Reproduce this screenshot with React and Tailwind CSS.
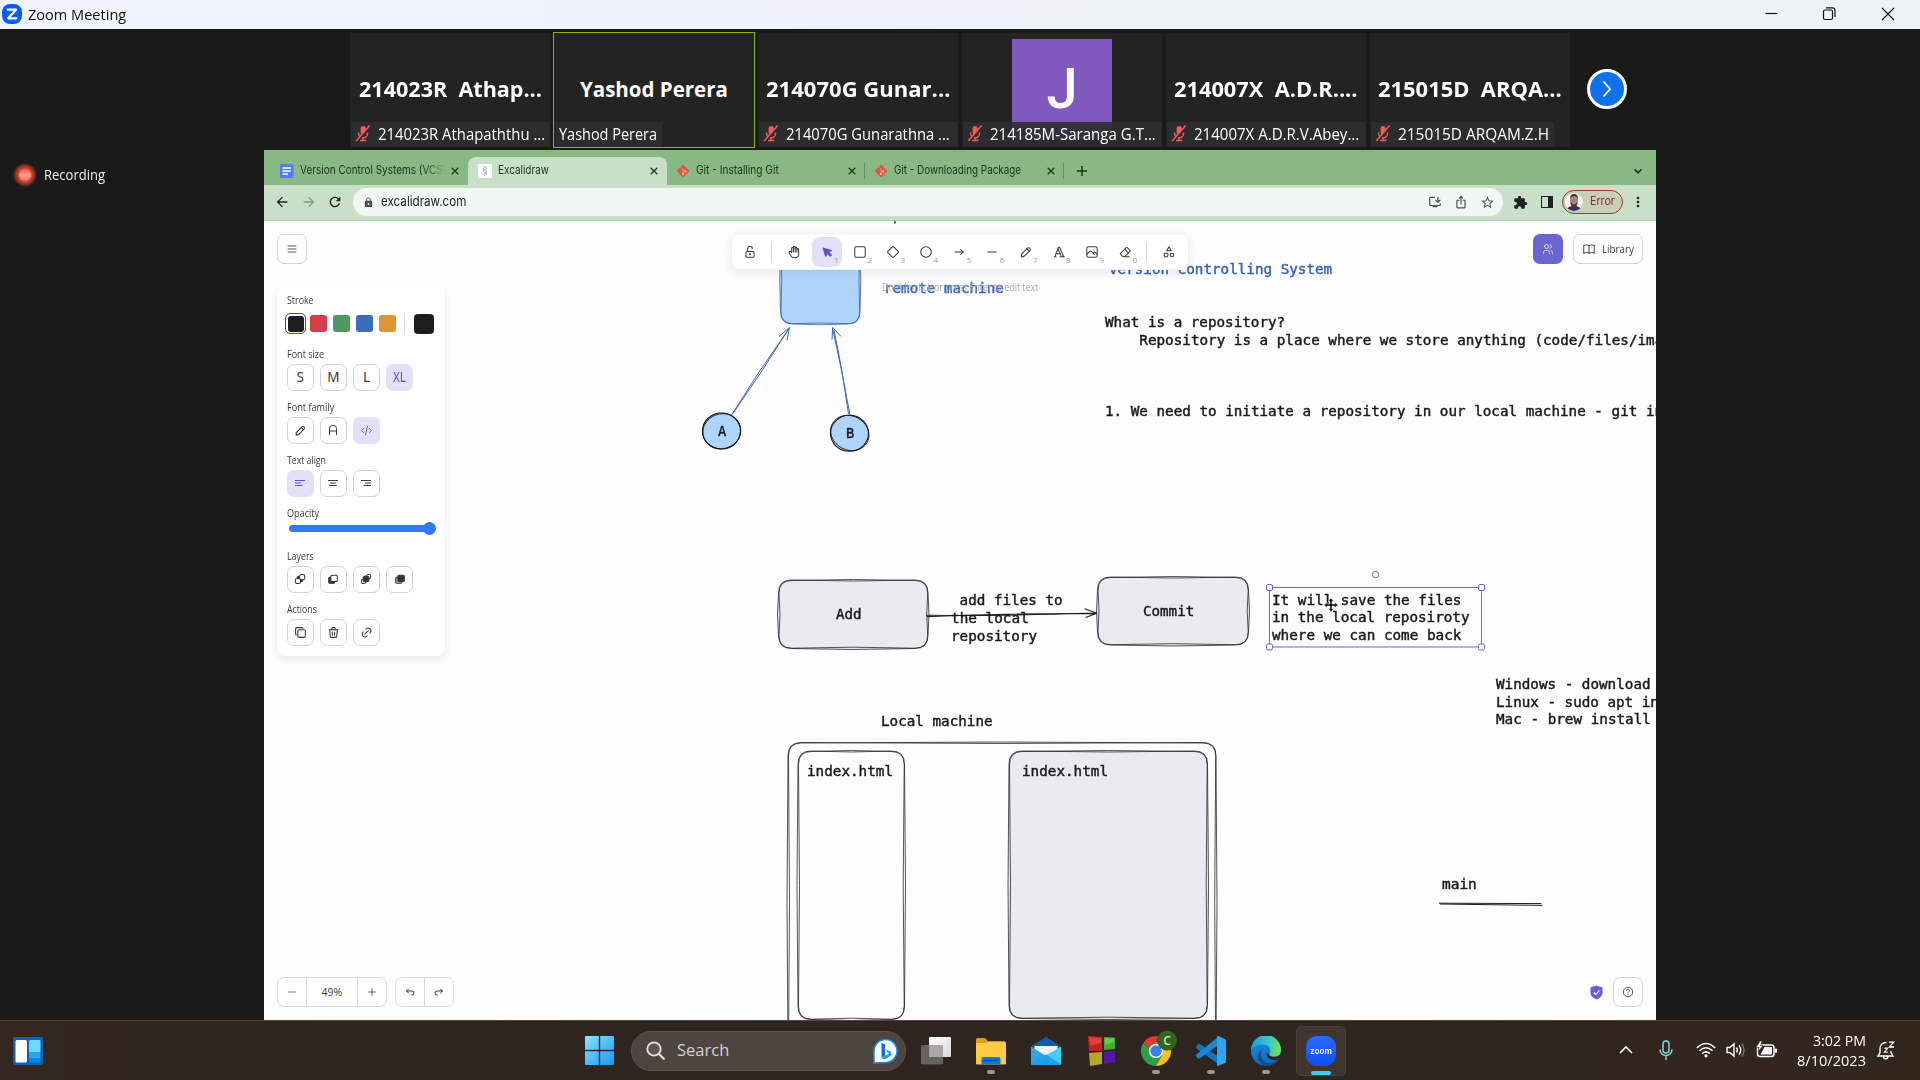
import { useLayoutEffect, useRef, useState } from "react";
import {
  TbLockOpen, TbHandStop, TbSquare, TbCircle, TbArrowNarrowRight, TbMinus, TbPencil, TbTypography,
  TbPhoto, TbEraser, TbTriangleSquareCircle, TbMenu2, TbUsers, TbBook, TbCopy, TbTrash, TbLink,
  TbPlus, TbArrowBackUp, TbArrowForwardUp, TbCode,
} from "react-icons/tb";
import { MdArrowBack, MdArrowForward, MdRefresh, MdLock, MdStarBorder, MdIosShare, MdInstallDesktop, MdExtension, MdMoreVert } from "react-icons/md";

/* Text squeezed or widened to an exact width. */
function Fit({ w, className = "", children }) {
  const ref = useRef(null);
  const [k, setK] = useState(1);
  useLayoutEffect(() => {
    if (ref.current) setK(w / ref.current.offsetWidth);
  }, [w]);
  return (
    <span className={"inline-block whitespace-pre " + className} style={{ width: w }}>
      <span ref={ref} className="inline-block origin-left" style={{ transform: `scaleX(${k})` }}>{children}</span>
    </span>
  );
}

const segoe = "font-['Open_Sans','Noto_Sans',sans-serif]";

function MutedMic() {
  return (
    <svg viewBox="0 0 16 17" className="h-[17px] w-4 shrink-0">
      <rect x="5.6" y="1" width="5" height="8.6" rx="2.5" fill="#f25c5c" />
      <path d="M3.6 7.5v.8a4.5 4.5 0 0 0 9 0v-.8M8.1 12.8v2.6M4.8 15.5h6.6" fill="none" stroke="#f25c5c" strokeWidth="1.4" />
      <path d="M15 1L2.2 16.4" stroke="#2a2a2a" strokeWidth="2.4" />
      <path d="M14.6 .6L1.2 16" stroke="#f25c5c" strokeWidth="1.5" />
    </svg>
  );
}

const people = [
  { big: "214023R  Athap...", bw: 183, label: "214023R Athapaththu ...", lw: 167, muted: true, full: true },
  { big: "Yashod Perera", bw: 148, label: "Yashod Perera", lw: 98, active: true },
  { big: "214070G Gunar...", bw: 185, label: "214070G Gunarathna ...", lw: 164, muted: true, full: true },
  { avatar: "J", label: "214185M-Saranga G.T...", lw: 166, muted: true, full: true },
  { big: "214007X  A.D.R....", bw: 184, label: "214007X A.D.R.V.Abey...", lw: 165, muted: true, full: true },
  { big: "215015D  ARQA...", bw: 184, label: "215015D ARQAM.Z.H", lw: 151, muted: true },
];

function Tile({ p }) {
  return (
    <div className={"relative flex h-[114px] w-[200px] items-center justify-center bg-[#232323] text-white " + (p.active ? "outline outline-1 outline-[#83b81a]" : "")}>
      {p.big && <Fit w={p.bw} className="-mt-[2px] text-[20.500px] leading-6 font-bold">{p.big}</Fit>}
      {p.avatar && (
        <div className="-mt-[2px] flex h-[100px] w-[100px] items-center justify-center bg-[#8058c0] font-[Roboto] text-[56px] leading-none font-medium">
          {p.avatar}
        </div>
      )}
      <div className={"absolute bottom-0 left-0 ml-px flex h-[25px] items-center bg-[#2e2e2e]/90 pb-[2px] " + (p.muted ? "pl-1" : "px-1") + (p.full ? " w-[199px]" : " pr-[5px]")}>
        {p.muted && <MutedMic />}
        <Fit w={p.lw} className={"text-[15.5px] leading-5 " + (p.muted ? "ml-[7px]" : "")}>{p.label}</Fit>
      </div>
    </div>
  );
}

function TitleBar() {
  return (
    <header className="flex h-[29px] items-center bg-gradient-to-r from-[#f0f3fb] to-[#eef3f7] pb-[1px] pl-[2px]">
      <svg viewBox="0 0 20 20" className="h-5 w-5">
        <rect width="20" height="20" rx="8" fill="#0b5cff" />
        <path d="M5.8 5.7h8.2L6.2 14.3h8.3" fill="none" stroke="#fff" strokeWidth="2.2" strokeLinejoin="round" strokeLinecap="round" />
      </svg>
      <Fit w={98} className="ml-[6px] text-[15px] leading-5 text-[#111]">Zoom Meeting</Fit>
      <svg viewBox="0 0 150 20" className="mr-[20px] ml-auto h-5 w-[150px]" fill="none" stroke="#111" strokeWidth="1.2">
        <path d="M15.500 9.500h12" />
        <rect x="73.500" y="6" width="9" height="9.500" rx="1.500" />
        <path d="M76 3.800h6.500a2.500 2.500 0 0 1 2.500 2.500v6.700" />
        <path d="M132 4l12 12M144 4l-12 12" />
      </svg>
    </header>
  );
}

const GitIcon = () => (
  <svg viewBox="0 0 14 14" className="-ml-px h-[14px] w-[14px]">
    <rect x="2.400" y="2.400" width="9.200" height="9.200" rx="1" transform="rotate(45 7 7)" fill="#e8533a" />
    <path d="M5.200 3.200l1.800 1.900v4.900M7 5.200l2.200 2.200" stroke="#8fc18a" strokeWidth=".9" fill="none" />
    <circle cx="7" cy="10" r="1" fill="#fbe" /><circle cx="9.300" cy="7.400" r="1" fill="#fbe" />
  </svg>
);
const DocsIcon = () => (
  <svg viewBox="0 0 14 14" className="h-[14px] w-[14px]">
    <rect width="13.500" height="14" rx="1.500" fill="#4f7fec" />
    <path d="M2.500 4h8.500M2.500 7h8.500M2.500 10h5.500" stroke="#fff" strokeWidth="1.500" />
  </svg>
);
const ExcaliIcon = () => (
  <svg viewBox="0 0 14 14" className="h-[14px] w-[14px]">
    <rect width="14" height="14" fill="#fff" />
    <path d="M5 2l4 3-4 2 4 3-3 2M9 2L5 5l4 3-4 3" stroke="#999" strokeWidth=".7" fill="none" />
  </svg>
);
const Close = () => (
  <svg viewBox="0 0 10 10" className="h-[10px] w-[10px]"><path d="M1.700 1.700l6.600 6.600M8.300 1.700L1.700 8.300" stroke="#1c3a1e" strokeWidth="1.300" /></svg>
);

function Tab({ icon, title, w, active, divider, fade }) {
  return (
    <div className={"relative flex h-[28px] w-[198.4px] items-center pl-[10px] text-[#1c331d] " + (active ? "rounded-t-lg bg-[#cadfc8]" : "")}>
      {icon}
      <Fit w={w} className={"ml-[6px] font-[Inter] text-[11.5px] " + (fade ? "[mask-image:linear-gradient(to_right,#000_85%,transparent)]" : "")}>{title}</Fit>
      <div className="mr-[8px] ml-auto flex"><Close /></div>
      {divider && <div className="absolute top-[6px] right-0 h-4 w-px bg-[#5f8f62]" />}
    </div>
  );
}

function Browser() {
  return (
    <>
      <div className="flex h-[35px] items-end bg-[#88b883] pl-[6px]">
        <Tab icon={<DocsIcon />} title="Version Control Systems (VCS)" w={146} fade />
        <Tab icon={<ExcaliIcon />} title="Excalidraw" w={51} active />
        <Tab icon={<GitIcon />} title="Git - Installing Git" w={83} divider />
        <Tab icon={<GitIcon />} title="Git - Downloading Package" w={127} divider />
        <svg viewBox="0 0 12 12" className="mb-2 ml-[12px] h-3 w-3"><path d="M6 1v10M1 6h10" stroke="#1c331d" strokeWidth="1.500" /></svg>
        <svg viewBox="0 0 12 12" className="mr-3 mb-2 ml-auto h-3 w-3"><path d="M2.500 4.200L6 7.800l3.500-3.600" fill="none" stroke="#1c331d" strokeWidth="1.500" /></svg>
      </div>
      <div className="flex h-[36px] items-center border-b border-[#b9cbb7] bg-[#cadfc8] pb-px pl-[10px] text-[#222]">
        <MdArrowBack className="h-4 w-4" />
        <MdArrowForward className="ml-[11px] h-4 w-4 text-[#849783]" />
        <MdRefresh className="ml-[10px] h-4 w-4" />
        <div className="ml-[10px] flex h-[28px] w-[1150px] items-center rounded-full bg-[#f1f7f3] pl-[10px] text-[#4a4f4a]">
          <MdLock className="h-[11px] w-[11px]" />
          <Fit w={85} className="ml-[7px] font-[Inter] text-[13px] text-[#222]">excalidraw.com</Fit>
          <MdInstallDesktop className="ml-auto h-[14px] w-[14px]" />
          <MdIosShare className="ml-[12px] h-[14px] w-[14px]" />
          <MdStarBorder className="mr-[8px] ml-[12px] h-[15px] w-[15px]" />
        </div>
        <MdExtension className="ml-[10px] h-[15px] w-[15px]" />
        <div className="ml-[13px] h-3 w-3 border-[1.5px] border-r-[5px] border-[#222]" />
        <div className="ml-[9px] flex h-[24px] w-[61px] items-center rounded-full border border-[#a3372f] bg-[#c8cfb9] pl-[2px]">
          <svg viewBox="0 0 18 18" className="h-[18px] w-[18px]">
            <clipPath id="face"><circle cx="9" cy="9" r="9" /></clipPath>
            <g clipPath="url(#face)">
              <rect width="18" height="18" fill="#f4f4f4" />
              <path d="M1 18q1-5 8-5t8 5z" fill="#2a3560" />
              <ellipse cx="9" cy="7.500" rx="4" ry="5.500" fill="#a9837a" />
              <path d="M5 6q0-5 4-5t4 5q-1-3-4-3t-4 3z" fill="#333" />
              <path d="M5.400 9.500q3.600 1.500 7.200 0-.6 5-3.600 5t-3.600-5z" fill="#4a3a38" />
              <path d="M7.500 10.600h3" stroke="#ccc" strokeWidth=".8" />
            </g>
          </svg>
          <Fit w={25} className="ml-[7px] font-[Inter] text-[11.5px] text-[#8f2a22]">Error</Fit>
        </div>
        <MdMoreVert className="ml-[7px] h-4 w-4" />
      </div>
    </>
  );
}

/* Hand-drawn rounded rectangle: r is the corner radius, d the bow of each side. */
function sketchRect(x, y, w, h, r, d) {
  const X = x + w, Y = y + h;
  return `M${x + r} ${y}Q${x + w / 2} ${y + d} ${X - r} ${y}Q${X} ${y} ${X} ${y + r}Q${X + d} ${y + h / 2} ${X} ${Y - r}Q${X} ${Y} ${X - r} ${Y}Q${x + w / 2} ${Y + d} ${x + r} ${Y}Q${x} ${Y} ${x} ${Y - r}Q${x - d} ${y + h / 2} ${x} ${y + r}Q${x} ${y} ${x + r} ${y}Z`;
}
function Sketch({ x, y, w, h, r = 13, fill = "none", stroke = "#1e1e1e", bow = 2 }) {
  return (
    <g stroke={stroke} strokeWidth="0.75">
      <path d={sketchRect(x, y, w, h, r, bow)} fill={fill} />
      <path d={sketchRect(x + 0.5, y + 0.5, w - 0.8, h - 0.8, r, -bow)} fill="none" />
    </g>
  );
}

function Drawing() {
  return (
    <svg viewBox="264 221 1392 799" className="absolute inset-0 h-[799px] w-[1392px]" fill="none">
      <path d="M895 219v4.500" stroke="#1e1e1e" strokeWidth="1.300" />
      <Sketch x={780.5} y={236} w={79.500} h={88} r={12} fill="#b0d5fc" stroke="#2e62ae" bow={1.5} />
      <g stroke="#3c69b4" strokeWidth="1">
        <path d="M731.500 415Q758 372 789.500 328M732.600 414Q761.500 373 788.500 329M789.500 327.500l-10.500 9M789.500 327.500l-2.500 13" />
        <path d="M850 415Q842 370 832.500 328M848.500 414Q842 368 834 330M832.700 327.500l-.7 12M832.700 327.500l8.300 9" />
      </g>
      <g stroke="#161616" strokeWidth="1.100">
        <ellipse cx="721.500" cy="431" rx="19" ry="18" fill="#b0d5fc" />
        <ellipse cx="721.800" cy="431.300" rx="19.200" ry="17.400" transform="rotate(-20 721.800 431.300)" strokeWidth=".8" />
        <ellipse cx="849.500" cy="433.300" rx="19" ry="18" fill="#b0d5fc" />
        <ellipse cx="849.800" cy="433" rx="19.800" ry="17" transform="rotate(28 849.800 433)" strokeWidth=".8" />
      </g>
      <Sketch x={778.5} y={580} w={149.500} h={68.500} fill="#e9ebf0" />
      <Sketch x={1097.5} y={577} w={151} h={68} fill="#e9ebf0" />
      <path d="M926 615.300Q1000 616 1096 613M927 616.600Q1020 613 1096 613.600M1097 613.300l-12.500-4.500M1097 613.300l-11.500 4.200" stroke="#1e1e1e" strokeWidth="1.100" />
      <Sketch x={788} y={742.500} w={428} h={320} />
      <Sketch x={798} y={751} w={106.500} h={268.500} />
      <Sketch x={1009} y={751} w={198.500} h={267.500} fill="#e9ebf0" />
      <path d="M1439 903.200L1541.500 903.600M1440 904L1542.500 905.400" stroke="#1e1e1e" strokeWidth="1" />
      <g stroke="#6f66cc" strokeWidth="1" fill="#fff">
        <rect x="1269.500" y="587.500" width="212" height="59.500" fill="none" />
        <rect x="1266.500" y="584.500" width="6" height="6" rx="1.500" />
        <rect x="1478.500" y="584.500" width="6" height="6" rx="1.500" />
        <rect x="1266.500" y="644" width="6" height="6" rx="1.500" />
        <rect x="1478.500" y="644" width="6" height="6" rx="1.500" />
        <circle cx="1375.500" cy="574.500" r="3.200" />
      </g>
    </svg>
  );
}

/* Canvas notes: x and y are page positions of the first glyph and the middle of the line. */
const notes = [
  [884, 288.500, "remote machine", "b"],
  [1108.500, 269.500, "Version Controlling System", "b"],
  [1104.500, 322, "What is a repository?"],
  [1104.500, 340, "    Repository is a place where we store anything (code/files/images)"],
  [1105, 411.500, "1. We need to initiate a repository in our local machine - git init"],
  [717.500, 431.500, "A"],
  [845.500, 433, "B"],
  [836, 614, "Add"],
  [1142.500, 611, "Commit"],
  [951, 600.500, " add files to"],
  [951, 618, "the local"],
  [951, 636, "repository"],
  [1272, 600, "It will save the files"],
  [1272, 617.500, "in the local reposiroty"],
  [1272, 635.500, "where we can come back"],
  [1495.500, 684.500, "Windows - download"],
  [1495.500, 702, "Linux - sudo apt install"],
  [1495.500, 719.500, "Mac - brew install git"],
  [880.500, 721.500, "Local machine"],
  [807, 771, "index.html"],
  [1022, 771, "index.html"],
  [1441.500, 884, "main"],
];

function Notes() {
  return notes.map(([x, y, t, c], i) => (
    <div key={i} className={"absolute flex h-[18px] items-center font-['DejaVu_Sans_Mono',monospace] text-[14.3px] leading-[18px] [-webkit-text-stroke:0.45px_currentColor] " + (c ? "text-[#3465b5]" : "text-[#1a1a1a]")} style={{ left: x - 264, top: y - 230.5 }}>
      <Fit w={t.length * 8.59}>{t}</Fit>
    </div>
  ));
}

const Diamond = ({ className }) => (
  <svg viewBox="0 0 24 24" className={className} fill="none" stroke="currentColor" strokeWidth="1.800"><path d="M10.500 3.500q1.500-1.300 3 0l7 7q1.300 1.500 0 3l-7 7q-1.500 1.300-3 0l-7-7q-1.300-1.500 0-3z" /></svg>
);
const Pointer = ({ className }) => (
  <svg viewBox="0 0 24 24" className={className}><path d="M5 5l4.800 15 2.700-5.300 4.800 5 2.700-2.700-5-4.800 5.300-2.700z" fill="#5b50c8" stroke="#5b50c8" strokeWidth="1.500" strokeLinejoin="round" /></svg>
);

const tools = [
  [TbHandStop, ""], [Pointer, "1"], [TbSquare, "2"], [Diamond, "3"], [TbCircle, "4"], [TbArrowNarrowRight, "5"],
  [TbMinus, "6"], [TbPencil, "7"], [TbTypography, "8"], [TbPhoto, "9"], [TbEraser, "0"],
];

function Toolbar() {
  return (
    <div className="absolute top-[12px] left-[467px] flex h-[37px] w-[458px] items-center rounded-lg border border-[#f0f0f3] bg-white text-[#3a3a3a] shadow-[0_3px_8px_rgba(60,60,120,0.10)]">
      <TbLockOpen className="ml-[11px] h-[14px] w-[14px]" strokeWidth={1.8} />
      <div className="ml-[14px] h-5 w-px bg-[#d5d5d8]" />
      <div className="ml-[5px] flex">
        {tools.map(([Icon, n], i) => (
          <div key={i} className="flex w-[33.15px] justify-center">
            <div className={"relative flex h-[30px] w-[30px] items-center justify-center rounded-lg " + (n === "1" ? "bg-[#e3e0fa]" : "")}>
              <Icon className="h-[14px] w-[14px]" strokeWidth={1.8} />
              {n && <span className="absolute right-[3px] bottom-[3px] font-['Open_Sans'] text-[8px] leading-none text-[#9a9a9f]">{n}</span>}
            </div>
          </div>
        ))}
      </div>
      <div className="ml-[4px] h-5 w-px bg-[#d5d5d8]" />
      <TbTriangleSquareCircle className="ml-[15px] h-[14px] w-[14px]" strokeWidth={1.8} />
    </div>
  );
}

const boxed = "flex items-center justify-center rounded-[7px] border border-[#d3d3d6] bg-white text-[#3a3a3a]";
const picked = "flex items-center justify-center rounded-[7px] bg-[#e3e0fa] text-[#5b50c8]";

function Opt({ on, children }) {
  return <div className={(on ? picked : boxed) + " h-[26.5px] w-[26.5px] font-['Noto_Sans'] text-[13.5px] leading-none"}>{children}</div>;
}
function Group({ label, w, h, children }) {
  return (
    <div style={{ height: h }}>
      <div className="flex h-[18px] items-center font-['Open_Sans','Noto_Sans'] text-[10.5px] text-[#3a3a3a]"><Fit w={w}>{label}</Fit></div>
      <div className="flex gap-[6.600px]">{children}</div>
    </div>
  );
}
function Lines({ a, b, c }) {
  return <svg viewBox="0 0 12 12" className="h-3 w-3"><path d={`M${a} 3.500h10M${b} 6h6M${c} 8.500h7.500`} stroke="currentColor" strokeWidth="1.100" /></svg>;
}
function Layer({ kind }) {
  const s = { stroke: "#333", strokeWidth: 1.2 };
  return (
    <svg viewBox="0 0 14 14" className="h-3 w-3">
      {kind === 0 && <g {...s} fill="#fff"><rect x="3.700" y="3.700" width="6.600" height="6.600" rx="2" fill="#333" /><rect x="6.500" y="1.800" width="6" height="6" rx="2" /><rect x="1.600" y="6.300" width="6" height="6" rx="2" /></g>}
      {kind === 1 && <g {...s}><rect x="2" y="5" width="7" height="7" rx="1.300" fill="#333" /><rect x="4.500" y="2.500" width="7.500" height="7.500" rx="1.300" fill="#fff" /></g>}
      {kind === 2 && <g {...s} fill="#fff"><rect x="7.500" y="1.800" width="5" height="5" rx="2" /><rect x="1.600" y="7.300" width="5" height="5" rx="2" /><rect x="3.700" y="3.700" width="6.600" height="6.600" rx="2" fill="#333" /></g>}
      {kind === 3 && <g {...s}><rect x="2" y="5" width="7" height="7" rx="1.300" fill="#bbb" /><rect x="4.500" y="2.500" width="7.500" height="7.500" rx="1.300" fill="#333" /></g>}
    </svg>
  );
}

function Sidebar() {
  return (
    <div className="absolute top-[64px] left-[13px] flex h-[371px] w-[168px] flex-col rounded-lg bg-white pt-[7px] pl-[10px] shadow-[0_4px_7px_rgba(60,60,120,0.09)]">
      <Group label="Stroke" w={27} h={54}>
        <div className="-ml-[2px] flex h-[27px] items-center">
          <div className="flex h-[21px] w-[21px] items-center justify-center rounded-[5px] border-[1.500px] border-[#4a4592]"><div className="h-[16px] w-[16px] rounded-[3px] bg-[#1e1e1e]" /></div>
          <div className="ml-[3.500px] h-[17px] w-[17px] rounded-[3px] bg-gradient-to-r from-[#d2413c] to-[#d43b55]" />
          <div className="ml-[6px] h-[17px] w-[17px] rounded-[3px] bg-gradient-to-r from-[#4f9470] to-[#4f9c4c]" />
          <div className="ml-[6px] h-[17px] w-[17px] rounded-[3px] bg-[#3a6db9]" />
          <div className="ml-[6px] h-[17px] w-[17px] rounded-[3px] bg-[#de9334]" />
          <div className="ml-[8px] h-[21px] w-px bg-[#dddde0]" />
          <div className="ml-[9px] h-[20px] w-[20px] rounded-[4px] bg-[#1e1e1e]" />
        </div>
      </Group>
      <Group label="Font size" w={37} h={53}><Opt>S</Opt><Opt>M</Opt><Opt>L</Opt><Opt on><Fit w={13}>XL</Fit></Opt></Group>
      <Group label="Font family" w={47} h={53}>
        <Opt><TbPencil className="h-[13px] w-[13px]" /></Opt>
        <Opt><svg viewBox="0 0 12 12" className="h-3 w-3"><path d="M2.500 11V4.500a3 3 0 0 1 3-3h1a3 3 0 0 1 3 3V11M2.500 7h7" fill="none" stroke="currentColor" /></svg></Opt>
        <Opt on><TbCode className="h-[13px] w-[13px]" strokeWidth={1.6} /></Opt>
      </Group>
      <Group label="Text align" w={39} h={53}>
        <Opt on><Lines a={1} b={1} c={1} /></Opt><Opt><Lines a={1} b={3} c={2.2} /></Opt><Opt><Lines a={1} b={5} c={3.5} /></Opt>
      </Group>
      <Group label="Opacity" w={32} h={43}>
        <div className="-mt-[1px] ml-[2px] flex h-3 w-[147px] items-center"><div className="h-[7px] w-[137px] rounded-l-full bg-[#3478f6]" /><div className="-ml-[3px] h-[13px] w-[13px] rounded-full bg-[#3478f6]" /></div>
      </Group>
      <Group label="Layers" w={27} h={53}>
        {[0, 1, 2, 3].map((k) => <Opt key={k}><Layer kind={k} /></Opt>)}
      </Group>
      <Group label="Actions" w={30} h={53}>
        <Opt><TbCopy className="h-[13px] w-[13px]" /></Opt><Opt><TbTrash className="h-[13px] w-[13px]" /></Opt><Opt><TbLink className="h-[13px] w-[13px]" /></Opt>
      </Group>
    </div>
  );
}

function Canvas() {
  return (
    <div className="relative h-[799px] overflow-hidden bg-[#fdfdfe]">
      <Drawing />
      <Notes />
      <div className="absolute top-[58px] left-[618px] flex h-4 items-center font-['Open_Sans'] text-[10px] text-[#a9a9ae]">
        <Fit w={156}>Double-click or press Enter to edit text</Fit>
      </div>
      <svg viewBox="0 0 14 14" className="absolute top-[377px] left-[1060px] h-[14px] w-[14px]">
        <path d="M7 0l2.600 3.200H8v2.800h2.800V4.400L14 7l-3.200 2.600V8H8v2.800h1.600L7 14l-2.600-3.200H6V8H3.200v1.600L0 7l3.200-2.600V6H6V3.200H4.400z" fill="#111" stroke="#fff" strokeWidth=".4" />
      </svg>
      <div className={"absolute top-[13px] left-[13px] h-[30px] w-[30px] " + boxed}><TbMenu2 className="h-3 w-3" strokeWidth={1.7} /></div>
      <Toolbar />
      <div className="absolute top-[13px] right-[13px] flex h-[30px] gap-[10px]">
        <div className="flex w-[30px] items-center justify-center rounded-[7px] bg-[#6965d1] text-white"><TbUsers className="h-3 w-3" strokeWidth={1.4} /></div>
        <div className={"w-[70px] gap-[6px] " + boxed}><TbBook className="h-[14px] w-[14px]" strokeWidth={1.6} /><Fit w={32} className="font-['Open_Sans'] text-[11px]">Library</Fit></div>
      </div>
      <Sidebar />
      <div className="absolute bottom-[13px] left-[13px] flex h-[30px] gap-[8px] text-[#3a3a3a]">
        <div className="flex w-[110px] divide-x divide-[#dcdcdf] rounded-[7px] border border-[#dcdcdf] bg-white">
          <div className="flex w-[29px] items-center justify-center"><TbMinus className="h-3 w-3" strokeWidth={1.5} /></div>
          <div className="flex flex-1 items-center justify-center pt-px font-['Open_Sans'] text-[10.5px]"><Fit w={21}>49%</Fit></div>
          <div className="flex w-[28px] items-center justify-center"><TbPlus className="h-3 w-3" strokeWidth={1.5} /></div>
        </div>
        <div className="flex w-[59px] divide-x divide-[#dcdcdf] rounded-[7px] border border-[#dcdcdf] bg-white">
          <div className="flex flex-1 items-center justify-center"><TbArrowBackUp className="h-3 w-3" /></div>
          <div className="flex flex-1 items-center justify-center"><TbArrowForwardUp className="h-3 w-3" /></div>
        </div>
      </div>
      <div className="absolute right-[13px] bottom-[13px] flex h-[30px] items-center gap-[10px]">
        <svg viewBox="0 0 14 15" className="h-[15px] w-[13px]"><path d="M7 0l6.500 2v5.500q0 5-6.500 7.500Q.5 12.500.5 7.500V2z" fill="#6860d0" /><path d="M4 7.500l2.200 2.200L10.200 5.500" fill="none" stroke="#fff" strokeWidth="1.200" /></svg>
        <div className={"h-[30px] w-[30px] " + boxed}>
          <svg viewBox="0 0 12 12" className="h-3 w-3" fill="none" stroke="currentColor" strokeWidth=".9"><circle cx="6" cy="6" r="4.700" /><path d="M4.500 4.900q0-1.500 1.500-1.500t1.500 1.300q0 .8-.8 1.200T6 7v.3M6 8.200v.9" /></svg>
        </div>
      </div>
    </div>
  );
}

const appIcons = {
  taskview: (
    <svg viewBox="0 0 30 30" className="h-[30px] w-[30px]">
      <defs><linearGradient id="tv" x1="0" y1="0" x2="1" y2="1"><stop stopColor="#fff" /><stop offset="1" stopColor="#d8d8d8" /></linearGradient></defs>
      <rect x="8" y="1" width="22" height="20" rx="1" fill="url(#tv)" /><rect x="0" y="9" width="22" height="19.500" rx="1" fill="#6d6967" opacity=".9" /><rect x="8" y="9" width="14" height="12" fill="#a9a6a4" />
    </svg>
  ),
  explorer: (
    <svg viewBox="0 0 30 30" className="h-[30px] w-[30px]">
      <path d="M0 3.500Q0 2 1.500 2H9l3 3.500H28V14H0z" fill="#e0a010" /><path d="M0 7h10l3-1.500h15.500Q30 5.500 30 7v20.500q0 1-1 1H1q-1 0-1-1z" fill="#ffcb45" />
      <path d="M5.500 28.500V23q0-2 2-2h15q2 0 2 2v5.500z" fill="#1578cf" /><path d="M9 24.500h12" stroke="#0d4f94" strokeWidth="1.500" strokeLinecap="round" />
    </svg>
  ),
  mail: (
    <svg viewBox="0 0 30 30" className="h-[30px] w-[30px]">
      <path d="M0 10.500L15 1l15 9.500V20H0z" fill="#0f5ca8" /><path d="M3.500 10h23v9h-23z" fill="#f2f2f2" /><path d="M0 10.500l15 9.500L0 29z" fill="#2ba4e8" /><path d="M30 10.500L15 20l15 9z" fill="#3fd0f5" />
      <path d="M0 28q0 1 1 1h28q1 0 1-1L15 18.500z" fill="#1f9fe8" /><path d="M15 18.500L30 28V11.500z" fill="#45cdf3" opacity=".75" />
    </svg>
  ),
  cubes: (
    <svg viewBox="0 0 30 30" className="ml-[2px] h-[30px] w-[30px]">
      <path d="M1 0l14 1v14H2z" fill="#c3221b" /><path d="M17 1l11 .5V13l-11 1z" fill="#3fae2a" /><path d="M2 17l13-1v12L3 30z" fill="#b3a82b" /><path d="M17 16l11-1v11l-11 2z" fill="#5417a8" />
      <path d="M2 1l12 1v5L3 10z" fill="#f05a4a" opacity=".6" /><path d="M18 2l9 .5V6l-9 3z" fill="#8fe070" opacity=".5" />
    </svg>
  ),
  chrome: (
    <svg viewBox="0 0 38 36" className="-mt-[6px] -mr-[8px] h-[36px] w-[38px]">
      <path d="M15 21L2 13.500A15 15 0 0 1 28 13.500z" fill="#e33b2e" />
      <path d="M15 21L2 13.500A15 15 0 0 0 15 36L21.500 24.700z" fill="#2f9e48" />
      <path d="M15 21l6.500 3.700L15 36A15 15 0 0 0 28 13.500H15z" fill="#fbc116" />
      <circle cx="15" cy="21" r="7.200" fill="#fff" /><circle cx="15" cy="21" r="5.700" fill="#3b7ded" />
      <circle cx="26" cy="10.500" r="10" fill="#2f661c" />
      <text x="26" y="14.800" textAnchor="middle" fontFamily="Open Sans" fontWeight="600" fontSize="12" fill="#cfe3c8">C</text>
    </svg>
  ),
  code: (
    <svg viewBox="0 0 30 30" className="h-[30px] w-[30px]">
      <path d="M.5 11.200q-1 1.300 0 2.300L22 29l.5-7.500L3.500 8.800q-1.500-.6-3 2.400z" transform="translate(0 -1)" fill="#1174bd" />
      <path d="M.5 20.500q-1-1.300 0-2.300L22 1l.5 8L3.500 22.500q-1.500.8-3-2z" fill="#1b86d1" />
      <path d="M22 0l7 3q1 .5 1 1.500v21q0 1-1 1.500l-7 3q-1.500-.3-1-1.500V1.500Q20.500.3 22 0z" fill="#2fa6f0" />
    </svg>
  ),
  edge: (
    <svg viewBox="0 0 30 30" className="h-[30px] w-[30px]">
      <defs>
        <linearGradient id="eg" x1="0" y1=".3" x2="1" y2=".5"><stop stopColor="#1d9fd8" /><stop offset=".5" stopColor="#31c3d4" /><stop offset="1" stopColor="#6be25a" /></linearGradient>
        <linearGradient id="eb" x1="0" y1="0" x2="0" y2="1"><stop stopColor="#1a8fd8" /><stop offset="1" stopColor="#0f6cc0" /></linearGradient>
      </defs>
      <circle cx="15" cy="15" r="15" fill="url(#eb)" />
      <path d="M0 14A15 15 0 0 1 30 14q0 6.500-7 6.500-5 0-5-2.500 1.500-1 1.500-3.500Q19 9 12 8.500 4 8.500 0 14z" fill="url(#eg)" />
      <path d="M10.500 14q-2.500 6 2.500 11t14-2q-4 7-12 7Q7 28 6.500 20q.5-4 4-6z" fill="#0c4f96" />
      <path d="M18 18q.5 3 5.500 3t6.500-4.500V19l-1 4q-4 2-8 1-5-1.500-5.500-5.500 1-1.500 2.500-.5z" fill="#32261f" />
    </svg>
  ),
  zoom: (
    <div className="flex h-[30px] w-[30px] items-center justify-center rounded-[11px] bg-gradient-to-b from-[#2a6cff] to-[#0b4ff0] text-white">
      <Fit w={22} className="font-['Inter'] text-[9px] leading-none font-semibold">zoom</Fit>
    </div>
  ),
};
const apps = [["taskview", ""], ["explorer", "run"], ["mail", ""], ["cubes", ""], ["chrome", "run"], ["code", "run"], ["edge", "run"], ["zoom", "on"]];

function Taskbar() {
  return (
    <footer className="flex h-[60px] items-center border-t border-[#50463f] bg-gradient-to-r from-[#33271f] via-[#2e2521] to-[#33261d] text-white">
      <svg viewBox="0 0 30 28" className="ml-[13px] h-[28px] w-[30px]">
        <rect width="30" height="28" rx="2" fill="#0b62b8" /><rect x="2.500" y="3" width="11.500" height="22.500" rx="1.500" fill="#fff" />
        <rect x="16" y="3" width="11.500" height="12.500" rx="1" fill="#6fd7fb" /><rect x="16" y="15.500" width="11.500" height="5.500" fill="#2aa3ef" /><rect x="16" y="21" width="11.500" height="4.500" fill="#0a84e8" />
      </svg>
      <svg viewBox="0 0 29 29" className="ml-[542px] h-[29px] w-[29px]">
        <defs><linearGradient id="win" x1="0" y1="0" x2="1" y2="1"><stop stopColor="#8ee4fe" /><stop offset="1" stopColor="#1597f5" /></linearGradient></defs>
        <path d="M0 1q0-1 1-1h12.800v13.800H0zM15.200 0H28q1 0 1 1v12.800H15.200zM0 15.200h13.800V29H1q-1 0-1-1zM15.200 15.200H29V28q0 1-1 1H15.200z" fill="url(#win)" />
      </svg>
      <div className="ml-[17px] flex h-10 w-[275px] items-center rounded-full border border-[#5d5550] bg-[#4d4540]">
        <svg viewBox="0 0 20 20" className="ml-[14px] h-5 w-5"><circle cx="8" cy="8" r="6.700" fill="#5d5651" stroke="#e6e3e1" strokeWidth="1.800" /><path d="M13 13l5.500 5.500" stroke="#e6e3e1" strokeWidth="2.200" /></svg>
        <Fit w={52} className="ml-[11px] text-[16.500px] text-[#d6d2cf]">Search</Fit>
        <svg viewBox="0 0 26 26" className="mr-[7px] ml-auto h-[26px] w-[26px]">
          <path d="M2 25V13A11.500 11.500 0 1 1 13.500 24.500z" fill="#fff" stroke="#1d8fe0" strokeWidth="1.500" />
          <path d="M9.500 5l3.500 1.200v11.500L9.500 20z" fill="#1669d8" /><path d="M13 17.700L9.500 20q3 2 6 0l3.500-2.600q1.500-2.400-1-4.200l-4-2 1.500 3.600 1.700.7z" fill="#1ea2e8" />
        </svg>
      </div>
      <nav className="ml-[2.500px] flex">
        {apps.map(([k, s]) => (
          <div key={k} className="flex w-[55px] justify-center">
            <div className={"relative flex h-[50px] w-[50px] items-center justify-center " + (s === "on" ? "rounded-[5px] border border-[#4b413a] bg-[#41362f]" : "")}>
              {appIcons[k]}
              {s === "run" && <div className="absolute bottom-[2px] h-1 w-2 rounded-full bg-[#9d9792]" />}
              {s === "on" && <div className="absolute bottom-0 h-1 w-5 rounded-full bg-[#4cc2ff]" />}
            </div>
          </div>
        ))}
      </nav>
      <div className="mr-[25px] ml-auto flex items-center pb-px">
        <svg viewBox="0 0 14 10" className="h-[10px] w-[14px]"><path d="M1 8l6-6 6 6" fill="none" stroke="#fff" strokeWidth="1.600" /></svg>
        <svg viewBox="0 0 14 20" className="ml-[26px] h-5 w-[14px]" fill="none" stroke="#8bd3e4" strokeWidth="1.500"><rect x="4" y="1" width="6" height="12" rx="3" /><path d="M1 9.500a6 6 0 0 0 12 0M7 15.500V20" /></svg>
        <svg viewBox="0 0 20 16" className="ml-[23px] h-4 w-5" fill="none" stroke="#fff" strokeWidth="1.500"><path d="M.8 6Q10-3 19.200 6M3.500 8.800q6.500-6 13 0M6.200 11.600q3.800-3.400 7.600 0" /><circle cx="10" cy="13.800" r="1.600" fill="#fff" stroke="none" /></svg>
        <svg viewBox="0 0 20 16" className="ml-[10px] h-4 w-5" fill="none" stroke="#fff" strokeWidth="1.400"><path d="M1 5.500h2.800L8 1.800v12.400L3.800 10.500H1zM10.500 5.500q2 2.500 0 5M13 3.300q3.500 4.700 0 9.400" /><path d="M15.800 1.500q4.500 6.500 0 13" stroke="#7c726b" /></svg>
        <svg viewBox="0 0 21 18" className="ml-[10px] h-[18px] w-[21px]"><rect x="1.500" y="4" width="16.500" height="11.500" rx="2.500" fill="none" stroke="#fff" strokeWidth="1.500" /><path d="M4.500 13.500l4-7.500h7.500v7.500z" fill="#fff" /><path d="M4 0L0 6.500h3L2 11l5-6.500H4.500L6 0z" fill="#fff" stroke="#32261f" strokeWidth=".6" /><rect x="19" y="7.500" width="2" height="4.500" rx="1" fill="#fff" /></svg>
        <div className="ml-[20px] flex flex-col items-end leading-5">
          <Fit w={53} className="h-5 text-[15px]">3:02 PM</Fit>
          <Fit w={69} className="h-5 text-[15px]">8/10/2023</Fit>
        </div>
        <svg viewBox="0 0 18 19" className="ml-[11px] h-[19px] w-[18px]" fill="none" stroke="#fff" strokeWidth="1.400"><path d="M9.500 1.500Q3 1.500 3 8v3.500L1 15h15l-2-3.500V10M6.500 15.500q0 2.300 2.200 2.300t2.200-2.300" /><path d="M12 1.200h4.500L12.500 6h4.500M7.500 7.200h3l-3 4h3.200" strokeWidth="1.300" /></svg>
      </div>
    </footer>
  );
}

export default function App() {
  return (
    <div className={"flex h-[1080px] w-[1920px] flex-col overflow-hidden bg-[#1a1a1a] " + segoe}>
      <TitleBar />
      <section className="flex h-[121px] items-start gap-1 pt-1 pl-[350px]">
        {people.map((p) => <Tile key={p.label} p={p} />)}
        <div className="mt-[36px] ml-[13px] flex h-10 w-10 items-center justify-center rounded-full border-[3.500px] border-white bg-[#0e72ed]">
          <svg viewBox="0 0 14 18" className="h-[18px] w-[14px]"><path d="M4 2l6 7-6 7" fill="none" stroke="#fff" strokeWidth="1.800" strokeLinecap="round" /></svg>
        </div>
      </section>
      <main className="flex h-[870px]">
        <aside className="w-[264px] pt-[13px] pl-[13px]">
          <div className="flex items-center">
            <div className="flex h-6 w-6 items-center justify-center rounded-full bg-[radial-gradient(circle,#d2472f_40%,#5a2a1b_62%,transparent_72%)]"><div className="h-3 w-3 rounded-full bg-gradient-to-b from-[#ff5348] via-[#ff9a90] to-[#ff6f62]" /></div>
            <Fit w={61} className="ml-[7px] text-[14.500px] leading-5 text-[#eee]">Recording</Fit>
          </div>
        </aside>
        <div className="w-[1392px]">
          <Browser />
          <Canvas />
        </div>
      </main>
      <Taskbar />
    </div>
  );
}
